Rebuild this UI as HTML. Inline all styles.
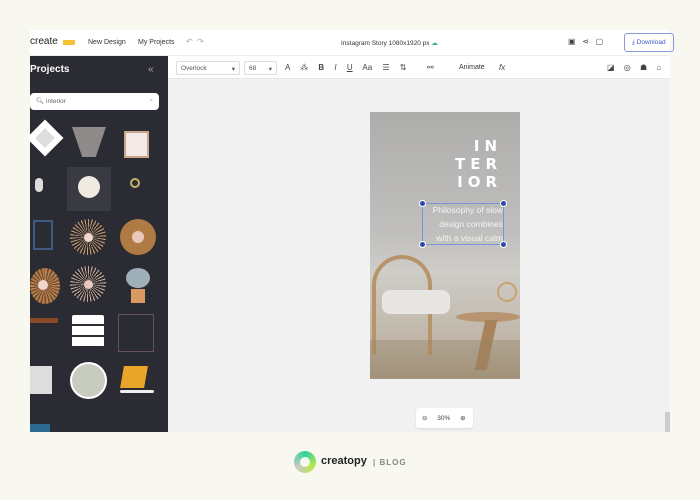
<!DOCTYPE html>
<html><head><style>
*{margin:0;padding:0;box-sizing:border-box}
body{width:700px;height:500px;background:#f8f8f0;position:relative;overflow:hidden;font-family:"Liberation Sans",sans-serif}
.a{position:absolute}
.t{font-size:7px;color:#333}
.ic{font-size:8px;color:#444}
</style></head><body>
<div class="a" style="left:30px;top:30px;width:640px;height:26px;background:#fff;border-bottom:1px solid #eee"></div>
<div class="a t" style="left:30px;top:36px;font-size:10px;color:#222">create</div>
<div class="a" style="left:63px;top:40px;width:12px;height:5px;background:#f2c230"></div>
<div class="a t" style="left:88px;top:39px">New Design</div>
<div class="a t" style="left:138px;top:39px">My Projects</div>
<div class="a t" style="left:186px;top:37px;color:#aaa;font-size:8px">↶ &nbsp;↷</div>
<div class="a t" style="left:341px;top:39px;font-size:6.5px">Instagram Story 1080x1920 px <span style="color:#2db27a">☁</span></div>
<div class="a ic" style="left:568px;top:37px">▣ &nbsp;&nbsp;⋖ &nbsp;&nbsp;▢</div>
<div class="a" style="left:624px;top:33px;width:50px;height:19px;border:1px solid #8a9ad8;border-radius:3px;font-size:6.5px;color:#3b56c8;padding:5px 0 0 7px">⤓ Download</div>
<div class="a" style="left:168px;top:56px;width:502px;height:23px;background:#fff;border-bottom:1px solid #e6e6e6"></div>
<div class="a" style="left:176px;top:61px;width:64px;height:14px;border:1px solid #ddd;border-radius:2px;font-size:6.5px;color:#555;padding:3px 4px">Overlock <span style="float:right">▾</span></div>
<div class="a" style="left:244px;top:61px;width:33px;height:14px;border:1px solid #ddd;border-radius:2px;font-size:6.5px;color:#555;padding:3px 4px">68 <span style="float:right">▾</span></div>
<div class="a ic" style="left:285px;top:63px;word-spacing:8px">A ⁂ <b>B</b> <i>I</i> <u>U</u> Aa ☰ ⇅ &nbsp;⚯</div>
<div class="a t" style="left:459px;top:64px">Animate</div>
<div class="a ic" style="left:499px;top:63px;font-style:italic">fx</div>
<div class="a ic" style="left:607px;top:63px;word-spacing:7px">◪ ◎ ☗ ⌂</div>
<div class="a" style="left:30px;top:56px;width:138px;height:376px;background:#2a2b33"></div>
<div class="a" style="left:30px;top:64px;font-size:10px;font-weight:bold;color:#fff">Projects</div>
<div class="a" style="left:148px;top:64px;font-size:10px;color:#aaa">«</div>
<div class="a" style="left:30px;top:93px;width:129px;height:17px;background:#fff;border-radius:4px;font-size:6.5px;color:#666;padding:4px 6px">🔍︎ interior<span style="float:right;color:#aaa">×</span></div>
<!-- icons grid -->
<div class="a" style="left:32px;top:125px;width:26px;height:26px;background:#ddd;transform:rotate(45deg);border:6px solid #fff"></div>
<div class="a" style="left:72px;top:127px;width:34px;height:30px;background:#8e8a8a;clip-path:polygon(0 0,100% 0,70% 100%,30% 100%)"></div>
<div class="a" style="left:124px;top:131px;width:25px;height:27px;background:#f3e9e6;border:2px solid #c8a888"></div>
<div class="a" style="left:35px;top:178px;width:8px;height:14px;background:#ddd;border-radius:4px"></div>
<div class="a" style="left:67px;top:167px;width:44px;height:44px;background:#3a3a42"></div>
<div class="a" style="left:78px;top:176px;width:22px;height:22px;background:#f0ebe2;border-radius:50%"></div>
<div class="a" style="left:130px;top:178px;width:10px;height:10px;border:2px solid #c7b26a;border-radius:50%"></div>
<div class="a" style="left:33px;top:220px;width:20px;height:30px;border:2px solid #3e5a80"></div>
<div class="a" style="left:70px;top:219px;width:36px;height:36px;border-radius:50%;background:repeating-conic-gradient(#c89a6a 0 4deg,transparent 4deg 12deg)"></div>
<div class="a" style="left:84px;top:233px;width:9px;height:9px;border-radius:50%;background:#f0d8cc"></div>
<div class="a" style="left:120px;top:219px;width:36px;height:36px;border-radius:50%;background:#b07a45"></div>
<div class="a" style="left:132px;top:231px;width:12px;height:12px;border-radius:50%;background:#e8c8bc"></div>
<div class="a" style="left:30px;top:268px;width:30px;height:36px;border-radius:50%;background:repeating-conic-gradient(#b8804c 0 8deg,#6b4a30 8deg 14deg)"></div>
<div class="a" style="left:38px;top:280px;width:10px;height:10px;border-radius:50%;background:#f0d8cc"></div>
<div class="a" style="left:70px;top:266px;width:36px;height:36px;border-radius:50%;background:repeating-conic-gradient(#c8a890 0 4deg,transparent 4deg 12deg)"></div>
<div class="a" style="left:84px;top:280px;width:9px;height:9px;border-radius:50%;background:#e8c8bc"></div>
<div class="a" style="left:126px;top:268px;width:24px;height:20px;border-radius:50%;background:#9fb0b8"></div>
<div class="a" style="left:131px;top:289px;width:14px;height:14px;background:#d99a62"></div>
<div class="a" style="left:30px;top:318px;width:28px;height:5px;background:#8a4a2a"></div>
<div class="a" style="left:72px;top:315px;width:32px;height:32px;background:#fff;border-radius:2px;background:repeating-linear-gradient(#fff 0 9px,#2a2b33 9px 11px)"></div>
<div class="a" style="left:118px;top:314px;width:36px;height:38px;border:1px solid #6a5056"></div>
<div class="a" style="left:30px;top:366px;width:22px;height:28px;background:#ddd"></div>
<div class="a" style="left:70px;top:362px;width:37px;height:37px;border-radius:50%;background:#c8ccc0;border:2px solid #fff"></div>
<div class="a" style="left:122px;top:366px;width:24px;height:22px;background:#e8a52a;transform:skewX(-10deg)"></div>
<div class="a" style="left:120px;top:390px;width:34px;height:3px;background:#eee;border-radius:2px"></div>
<div class="a" style="left:30px;top:424px;width:20px;height:8px;background:#2d6a90"></div>
<!-- canvas -->
<div class="a" style="left:168px;top:79px;width:502px;height:353px;background:#f1f1f1"></div>
<div class="a" style="left:665px;top:412px;width:5px;height:20px;background:#ccc"></div>
<div class="a" style="left:370px;top:112px;width:150px;height:267px;background:linear-gradient(#aeadab,#c0bfbd 45%,#cfcdc8 60%,#bfb6a8 85%,#a89a84)"></div>
<div class="a" style="left:372px;top:255px;width:60px;height:100px;border:4px solid #b8946a;border-radius:30px 30px 0 0;border-bottom:none"></div>
<div class="a" style="left:382px;top:290px;width:68px;height:24px;background:#e8e6e2;border-radius:8px"></div>
<div class="a" style="left:456px;top:312px;width:64px;height:10px;background:#b89470;border-radius:50%"></div>
<div class="a" style="left:480px;top:320px;width:12px;height:50px;background:#a8835c;transform:skewX(-12deg)"></div>
<div class="a" style="left:497px;top:282px;width:20px;height:20px;border:2px solid #c8a470;border-radius:50%"></div>
<div class="a" style="left:370px;top:340px;width:150px;height:38px;background:rgba(150,130,100,.35)"></div>
<div class="a" style="left:400px;top:137px;width:102px;text-align:right;color:#fff;font-weight:900;font-size:15px;letter-spacing:5px;line-height:18px;font-family:'DejaVu Sans',sans-serif">IN<br>TER<br>IOR</div>
<div class="a" style="left:422px;top:203px;width:82px;height:42px;border:1px solid #7a94d8"></div>
<div class="a" style="left:420px;top:203px;width:84px;text-align:right;color:#f4f4f4;font-size:8.5px;line-height:14px;padding-right:1px">Philosophy of slow<br>design combines<br>with a visual calm</div>
<div class="a" style="left:419px;top:200px;width:7px;height:7px;border-radius:50%;background:#2e4aa8;border:1px solid #fff"></div>
<div class="a" style="left:500px;top:200px;width:7px;height:7px;border-radius:50%;background:#2e4aa8;border:1px solid #fff"></div>
<div class="a" style="left:419px;top:241px;width:7px;height:7px;border-radius:50%;background:#2e4aa8;border:1px solid #fff"></div>
<div class="a" style="left:500px;top:241px;width:7px;height:7px;border-radius:50%;background:#2e4aa8;border:1px solid #fff"></div>
<div class="a" style="left:416px;top:408px;width:57px;height:20px;background:#fff;border-radius:3px;box-shadow:0 1px 2px rgba(0,0,0,.1);font-size:6.5px;color:#444;padding:6px 6px;word-spacing:8px">⊖ 30% ⊕</div>
<!-- logo -->
<div class="a" style="left:294px;top:451px;width:22px;height:22px;border-radius:50%;background:conic-gradient(#2ed39a,#b8e84a,#c8c8c8,#2ed39a)"></div>
<div class="a" style="left:300px;top:457px;width:10px;height:10px;border-radius:50%;background:#f8f8f0"></div>
<div class="a" style="left:321px;top:455px;font-size:11px;font-weight:bold;color:#222">creatopy</div>
<div class="a" style="left:373px;top:458px;font-size:8px;font-weight:bold;color:#888;letter-spacing:1px">| BLOG</div>
</body></html>
